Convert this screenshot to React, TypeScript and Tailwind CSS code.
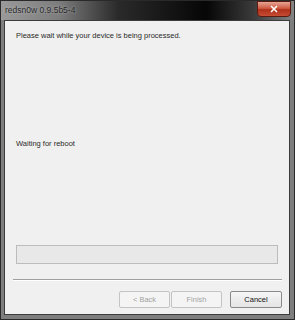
import { X } from 'lucide-react'

const font = { fontFamily: '"Liberation Sans", Arial, sans-serif' }

function WinButton({ label, disabled }: { label: string; disabled?: boolean }) {
  return (
    <button
      className={
        disabled
          ? 'h-[17px] w-[51px] border border-[#c4c4c4] bg-[#f4f4f4] text-[7.5px] leading-none text-[#a3a3a3] rounded-[2px]'
          : 'h-[17px] w-[52px] border border-[#8a8a8a] bg-[linear-gradient(#f6f6f6,#e4e4e4)] text-[7.5px] leading-none text-[#111] rounded-[2px]'
      }
    >
      {label}
    </button>
  )
}

export default function App() {
  return (
    <div className="w-[295px] h-[320px] bg-[#7e7e7e] border border-[#2a2a2a] flex flex-col" style={font}>
      {/* title bar */}
      <div className="h-[19px] flex items-center justify-between bg-[linear-gradient(90deg,#9a9a9a_0%,#7c7c7c_20%,#2a2a2a_40%,#060606_70%,#3a3a3a_86%,#848484_100%)]">
        <span className="pl-[4px] text-[8.5px] text-[#2a2a2a] [text-shadow:0_0_3px_rgba(230,230,230,0.6)]">redsn0w 0.9.5b5-4</span>
        <div className="self-start mr-[3px] h-[16px] w-[34px] rounded-b-[4px] border border-[#5a1a10] bg-[linear-gradient(#e6a594_0%,#cf5a42_45%,#b0301a_55%,#c64c34_100%)] flex items-center justify-center">
          <X className="w-[10px] h-[10px] text-white" strokeWidth={4} />
        </div>
      </div>

      {/* client area */}
      <div className="flex-1 mx-[3px] mr-[4px] mb-[4px] border border-[#3c3c3c] bg-[#f0f0f0] flex flex-col text-[7.5px] text-[#2a2a2a]">
        <p className="mt-[10px] ml-[11px] leading-[10px]">Please wait while your device is being processed.</p>
        <p className="mt-[98px] ml-[11px] leading-[10px]">Waiting for reboot</p>
        <div className="mt-[96px] mx-[11px] h-[19px] border border-[#bcbcbc] bg-[#e8e8e8]" />
        <div className="mt-[15px] ml-[8px] mr-[7px] h-[2px] border-t border-[#a0a0a0] border-b border-b-white" />
        <div className="mt-[10px] mr-[7px] flex justify-end">
          <WinButton label="< Back" disabled />
          <div className="w-[1px]" />
          <WinButton label="Finish" disabled />
          <div className="w-[8px]" />
          <WinButton label="Cancel" />
        </div>
      </div>
    </div>
  )
}
